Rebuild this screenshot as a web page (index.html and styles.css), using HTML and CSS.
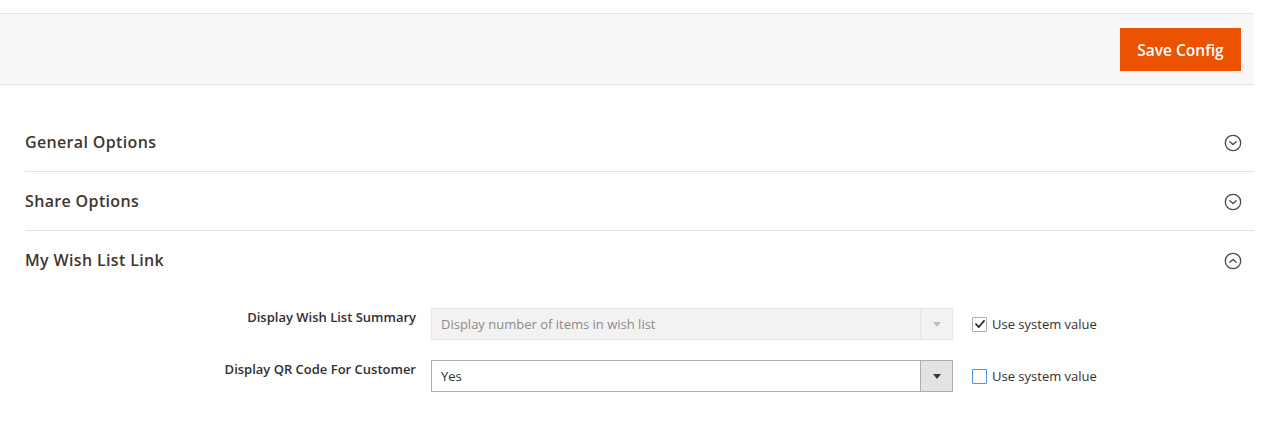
FILE: index.html
```html
<!DOCTYPE html>
<html lang="en">
<head>
<meta charset="utf-8">
<title>Wish List Configuration</title>
<link rel="stylesheet" href="styles.css">
</head>
<body>
  <div class="page-actions">
    <button class="btn-primary" type="button">Save Config</button>
  </div>

  <div class="sections">
    <div class="section">
      <div class="section-head">
        <span class="section-title">General Options</span>
        <svg class="toggle" width="18" height="18" viewBox="0 0 18 18"><circle cx="9" cy="9" r="7.7" fill="none" stroke="#514943" stroke-width="1.3"/><polyline points="5.8,7.7 9,10.6 12.2,7.7" fill="none" stroke="#514943" stroke-width="1.3" stroke-linecap="round" stroke-linejoin="round"/></svg>
      </div>
    </div>
    <div class="section">
      <div class="section-head">
        <span class="section-title">Share Options</span>
        <svg class="toggle" width="18" height="18" viewBox="0 0 18 18"><circle cx="9" cy="9" r="7.7" fill="none" stroke="#514943" stroke-width="1.3"/><polyline points="5.8,7.7 9,10.6 12.2,7.7" fill="none" stroke="#514943" stroke-width="1.3" stroke-linecap="round" stroke-linejoin="round"/></svg>
      </div>
    </div>
    <div class="section section-open">
      <div class="section-head">
        <span class="section-title">My Wish List Link</span>
        <svg class="toggle" width="18" height="18" viewBox="0 0 18 18"><circle cx="9" cy="9" r="7.7" fill="none" stroke="#514943" stroke-width="1.3"/><polyline points="5.8,10.3 9,7.4 12.2,10.3" fill="none" stroke="#514943" stroke-width="1.3" stroke-linecap="round" stroke-linejoin="round"/></svg>
      </div>
      <div class="fields">
        <div class="field-row">
          <label class="field-label">Display Wish List Summary</label>
          <div class="select select-disabled">
            <span class="select-value">Display number of items in wish list</span>
            <span class="select-arrow"><span class="tri"></span></span>
          </div>
          <div class="use-default">
            <span class="checkbox checked">
              <svg width="12" height="12" viewBox="0 0 12 12"><polyline points="2,6.2 4.8,9 10,2.8" fill="none" stroke="#303030" stroke-width="1.8" stroke-linecap="round" stroke-linejoin="round"/></svg>
            </span>
            <span class="use-label">Use system value</span>
          </div>
        </div>
        <div class="field-row">
          <label class="field-label">Display QR Code For Customer</label>
          <div class="select">
            <span class="select-value">Yes</span>
            <span class="select-arrow"><span class="tri"></span></span>
          </div>
          <div class="use-default">
            <span class="checkbox focus"></span>
            <span class="use-label">Use system value</span>
          </div>
        </div>
      </div>
    </div>
  </div>
</body>
</html>
```

FILE: styles.css
```css
html, body {
  margin: 0;
  padding: 0;
  background: #ffffff;
}

body {
  font-family: "Open Sans", "Liberation Sans", sans-serif;
  color: #303030;
  width: 1280px;
}

.page-actions {
  margin-top: 13px;
  width: 1254px;
  height: 72px;
  box-sizing: border-box;
  background: #f8f8f8;
  border-top: 1px solid #e3e3e3;
  border-bottom: 1px solid #e3e3e3;
  display: flex;
  justify-content: flex-end;
  align-items: flex-start;
  padding: 14px 13px 0 0;
}

.btn-primary {
  background: #eb5202;
  border: 1px solid #eb5202;
  color: #ffffff;
  font-family: "Open Sans", "Liberation Sans", sans-serif;
  font-weight: 600;
  font-size: 15.5px;
  height: 43px;
  width: 121px;
  padding: 0;
  margin: 0;
}

.sections {
  margin-top: 28px;
  margin-left: 25px;
  width: 1229px;
}

.section-head {
  height: 58px;
  display: flex;
  align-items: center;
  justify-content: space-between;
  border-bottom: 1px solid #e3e3e3;
}

.section-open .section-head {
  border-bottom: none;
}

.section-title {
  font-size: 16px;
  font-weight: 600;
  color: #41362f;
  letter-spacing: 0.35px;
}

.toggle {
  margin-right: 12px;
  margin-top: 2px;
}

.fields {
  padding-top: 19px;
  display: flex;
  flex-direction: column;
  gap: 20px;
}

.field-row {
  display: grid;
  grid-template-columns: 391px 522px auto;
  column-gap: 15px;
  align-items: start;
}

.field-label {
  text-align: right;
  font-size: 13px;
  font-weight: 600;
  color: #303030;
  padding-top: 0;
  line-height: 18px;
}

.select {
  height: 32px;
  box-sizing: border-box;
  border: 1px solid #adadad;
  background: #ffffff;
  display: flex;
  align-items: stretch;
}

.select-value {
  flex: 1;
  padding-left: 9px;
  font-size: 13px;
  line-height: 30px;
  color: #303030;
}

.select-arrow {
  width: 31px;
  border-left: 1px solid #adadad;
  background: #e3e3e3;
  display: flex;
  align-items: center;
  justify-content: center;
}

.tri {
  width: 0;
  height: 0;
  border-left: 4px solid transparent;
  border-right: 4px solid transparent;
  border-top: 5px solid #41362f;
  margin-top: 1px;
}

.select-disabled {
  border-color: #e6e6e6;
  background: #f2f2f2;
}

.select-disabled .select-value {
  color: #8c8c8c;
}

.select-disabled .select-arrow {
  border-left-color: #e6e6e6;
  background: #f2f2f2;
}

.select-disabled .tri {
  border-top-color: #bdbdbd;
}

.use-default {
  margin-left: 4px;
  display: flex;
  align-items: center;
  height: 32px;
  gap: 5px;
}

.checkbox {
  width: 15px;
  height: 15px;
  box-sizing: border-box;
  border: 1px solid #adadad;
  background: #ffffff;
  display: flex;
  align-items: center;
  justify-content: center;
  border-radius: 1px;
}

.checkbox.focus {
  border-color: #4a97dc;
}

.use-label {
  font-size: 13px;
  color: #303030;
}
```
